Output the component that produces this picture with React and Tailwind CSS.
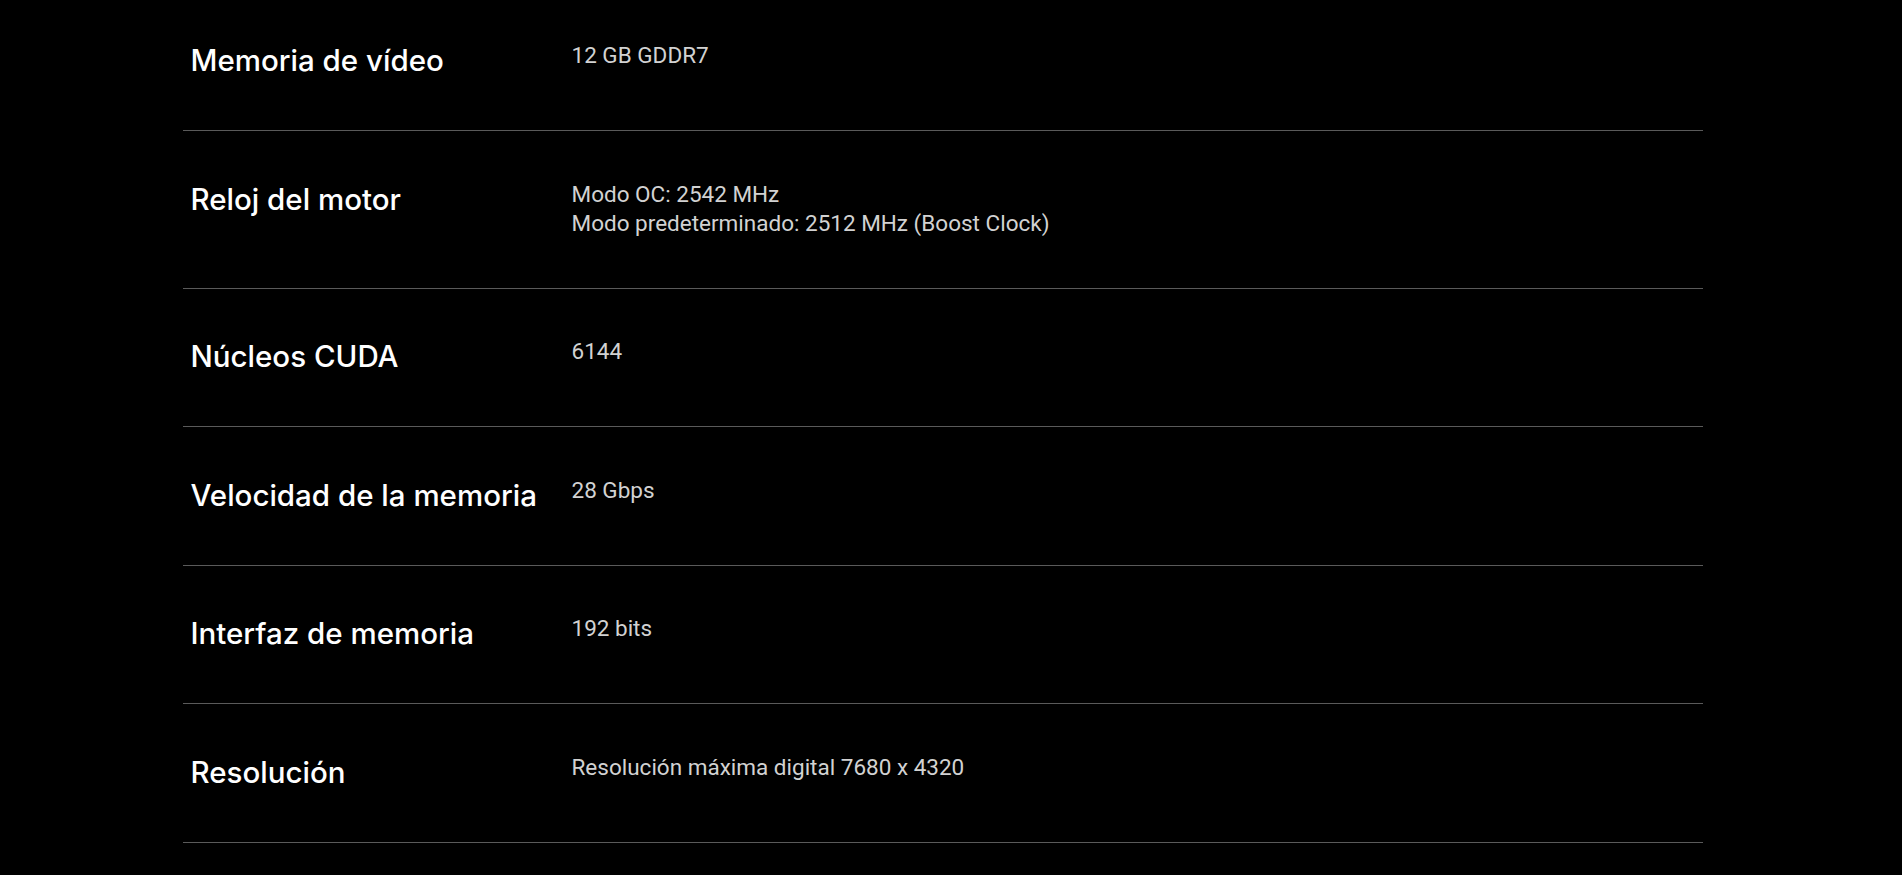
export default function App() {
  const rows = [
    { label: "Memoria de vídeo", values: ["12 GB GDDR7"] },
    { label: "Reloj del motor", values: ["Modo OC: 2542 MHz", "Modo predeterminado: 2512 MHz (Boost Clock)"] },
    { label: "Núcleos CUDA", values: ["6144"] },
    { label: "Velocidad de la memoria", values: ["28 Gbps"] },
    { label: "Interfaz de memoria", values: ["192 bits"] },
    { label: "Resolución", values: ["Resolución máxima digital 7680 x 4320"] },
  ];
  return (
    <div className="w-full h-[875px] bg-black overflow-hidden">
      <div className="w-[1885px]">
        <div className="w-[1520px] mx-auto mt-[-7.5px]">
          {rows.map((r) => (
            <div key={r.label} className="flex items-start border-b border-[#5a5a5a] pt-[48.5px] pb-[50px]">
              <div
                className="w-[389px] shrink-0 pl-[8px] text-white text-[29.5px] leading-[39px] font-medium"
                style={{ fontFamily: "Inter, 'Noto Sans', sans-serif" }}
              >
                {r.label}
              </div>
              <div
                className="text-[#d2d2d2] text-[22.5px] leading-[29px]"
                style={{ fontFamily: "Roboto, 'Liberation Sans', sans-serif" }}
              >
                {r.values.map((v) => (
                  <div key={v}>{v}</div>
                ))}
              </div>
            </div>
          ))}
        </div>
      </div>
    </div>
  );
}
